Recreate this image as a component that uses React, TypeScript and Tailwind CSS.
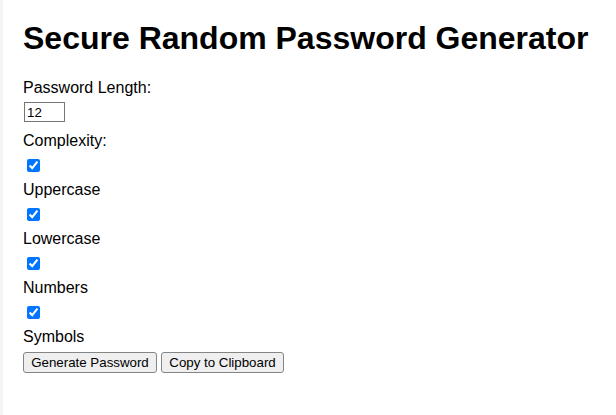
import React from 'react';

const options = ['Uppercase', 'Lowercase', 'Numbers', 'Symbols'];

const App: React.FC = () => {
  return (
    <div className="flex h-[415px] w-full bg-white text-black font-['Liberation_Sans',Arial,sans-serif]">
      <div className="w-[3px] bg-[#f4f4f4]"></div>
      <div className="flex flex-col items-start pl-[20px] pt-[20px]">
        <h1 className="text-[32px] leading-[37px] font-bold">Secure Random Password Generator</h1>

        <label className="mt-[22px] text-[16px] leading-[18px]">Password Length:</label>
        <input
          type="number"
          defaultValue={12}
          className="mt-[5px] ml-[1px] h-[20px] w-[41px] border border-[#767676] px-[2px] text-[13.3px] leading-[16px] [appearance:textfield]"
        />

        <label className="mt-[10px] text-[16px] leading-[18px]">Complexity:</label>

        {options.map((name) => (
          <React.Fragment key={name}>
            <input type="checkbox" defaultChecked className="mt-[9px] ml-[4px] h-[13px] w-[13px] accent-[#0075ff]" />
            <label className="mt-[9px] text-[16px] leading-[18px]">{name}</label>
          </React.Fragment>
        ))}

        <div className="mt-[6px] flex gap-[4px]">
          <button className="h-[21px] w-[134px] rounded-[3px] border border-[#858585] bg-[#efefef] text-[13.3px] leading-[16px]">
            Generate Password
          </button>
          <button className="h-[21px] w-[123px] rounded-[3px] border border-[#858585] bg-[#efefef] text-[13.3px] leading-[16px]">
            Copy to Clipboard
          </button>
        </div>
      </div>
    </div>
  );
};

export default App;
